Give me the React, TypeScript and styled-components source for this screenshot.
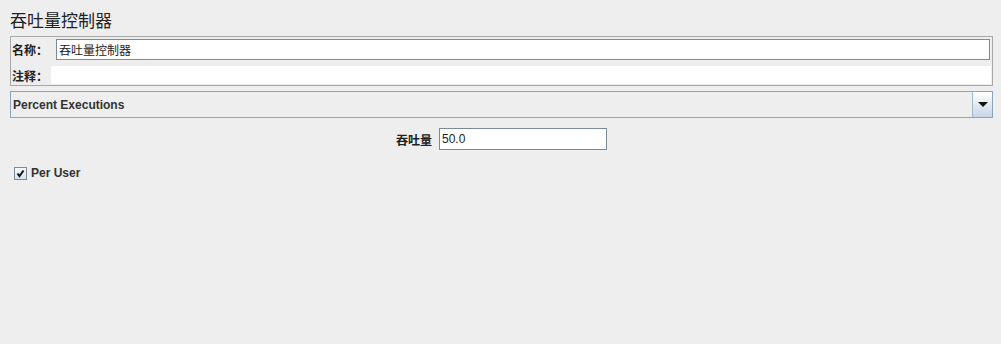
import React, { useState } from 'react';
import styled, { createGlobalStyle } from 'styled-components';

const GlobalStyle = createGlobalStyle`
    html, body {
        margin: 0;
        padding: 0;
        background: #eeeeee;
    }
    body {
        font-family: 'Liberation Sans', 'Noto Sans CJK SC', sans-serif;
        color: #333333;
    }
`;

const Page = styled.div`
    width: 1001px;
    height: 344px;
    box-sizing: border-box;
    padding: 0 8px 0 10px;
    background: #eeeeee;
    display: flex;
    flex-direction: column;
`;

const Title = styled.h1`
    margin: 0;
    height: 36px;
    line-height: 40px;
    font-size: 17px;
    font-weight: normal;
    font-family: 'Noto Sans CJK SC', sans-serif;
    color: #222222;
`;

const NamePanel = styled.div`
    border: 1px solid #a8a8a8;
    padding: 2px 1px 1px 1px;
    display: flex;
    flex-direction: column;
    gap: 6px;
`;

const Row = styled.div`
    display: flex;
    align-items: center;
`;

const Label = styled.label<{ $width: number }>`
    width: ${p => p.$width}px;
    flex-shrink: 0;
    font-size: 12px;
    font-weight: bold;
    font-family: 'Noto Sans CJK SC', sans-serif;
    color: #222222;
    white-space: nowrap;
`;

const NameInput = styled.input`
    flex: 1;
    height: 21px;
    box-sizing: border-box;
    margin-right: 1px;
    border: 1px solid #7a8a99;
    padding: 0 2px;
    font-size: 12px;
    font-family: 'Noto Sans CJK SC', sans-serif;
    color: #222222;
    background: #ffffff;
    outline: none;
`;

const CommentField = styled.div`
    flex: 1;
    height: 18px;
    background: #ffffff;
`;

const Combo = styled.div`
    margin-top: 5px;
    height: 27px;
    box-sizing: border-box;
    border: 1px solid #8ea3b8;
    display: flex;
    align-items: stretch;
    background: #eeeeee;
`;

const ComboText = styled.div`
    flex: 1;
    display: flex;
    align-items: center;
    padding-left: 2px;
    font-size: 12px;
    font-weight: bold;
    color: #333333;
`;

const ArrowButton = styled.div`
    width: 19px;
    border-left: 1px solid #a3b8cc;
    background: linear-gradient(#ffffff, #c6d6e6);
    display: flex;
    align-items: center;
    justify-content: center;
`;

const Arrow = styled.div`
    width: 0;
    height: 0;
    border-left: 5px solid transparent;
    border-right: 5px solid transparent;
    border-top: 5px solid #111111;
`;

const ThroughputRow = styled.div`
    margin-top: 10px;
    display: flex;
    justify-content: center;
    align-items: center;
    gap: 6px;
`;

const ThroughputInput = styled.input`
    width: 168px;
    height: 22px;
    box-sizing: border-box;
    border: 1px solid #7a8a99;
    padding: 0 2px;
    font-size: 12px;
    font-family: 'Liberation Sans', sans-serif;
    color: #222222;
    background: #ffffff;
    outline: none;
`;

const CheckRow = styled.label`
    margin-top: 16px;
    margin-left: 4px;
    display: flex;
    align-items: center;
    gap: 4px;
    font-size: 12px;
    font-weight: bold;
    color: #333333;
`;

const Box = styled.span`
    width: 13px;
    height: 13px;
    box-sizing: border-box;
    border: 1px solid #7a8a99;
    background: linear-gradient(#f4f8fc, #d6e2ee);
    display: flex;
    align-items: center;
    justify-content: center;
`;

export default function App() {
    const [name, setName] = useState('吞吐量控制器');
    const [throughput, setThroughput] = useState('50.0');
    const [perUser, setPerUser] = useState(true);

    return (
        <Page>
            <GlobalStyle />
            <Title>吞吐量控制器</Title>
            <NamePanel>
                <Row>
                    <Label $width={44}>名称：</Label>
                    <NameInput value={name} onChange={e => setName(e.target.value)} />
                </Row>
                <Row>
                    <Label $width={39}>注释：</Label>
                    <CommentField />
                </Row>
            </NamePanel>
            <Combo>
                <ComboText>Percent Executions</ComboText>
                <ArrowButton>
                    <Arrow />
                </ArrowButton>
            </Combo>
            <ThroughputRow>
                <Label $width={37}>吞吐量</Label>
                <ThroughputInput
                    value={throughput}
                    onChange={e => setThroughput(e.target.value)}
                />
            </ThroughputRow>
            <CheckRow onClick={() => setPerUser(!perUser)}>
                <Box>
                    {perUser && (
                        <svg width="9" height="9" viewBox="0 0 9 9">
                            <path d="M1.5 4.5 L3.5 7 L7.5 1.5" stroke="#111" strokeWidth="2" fill="none" />
                        </svg>
                    )}
                </Box>
                Per User
            </CheckRow>
        </Page>
    );
}
